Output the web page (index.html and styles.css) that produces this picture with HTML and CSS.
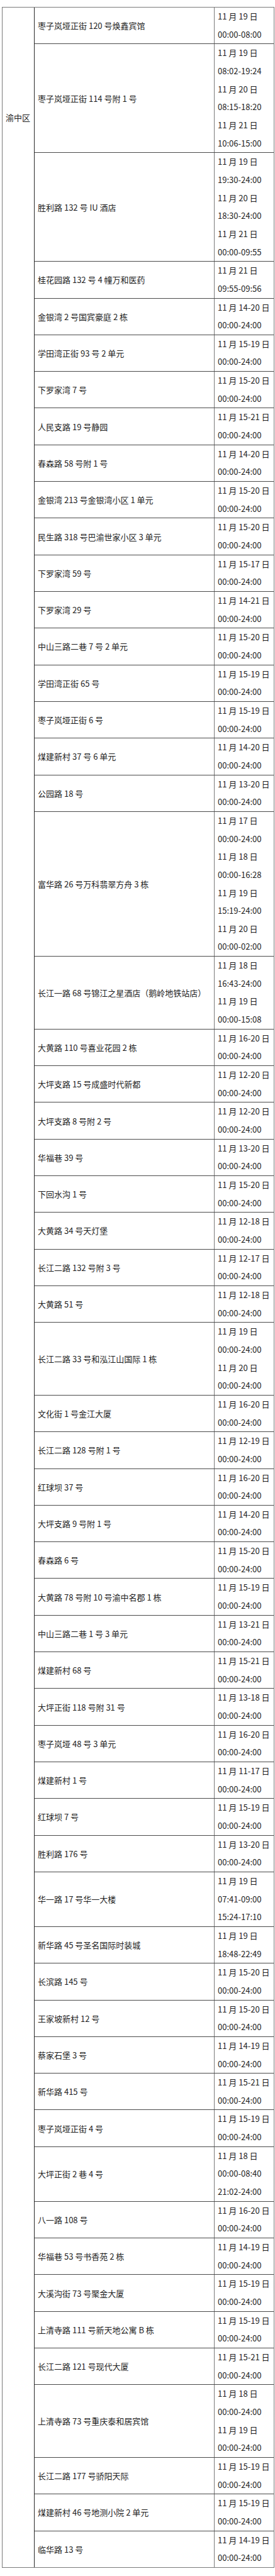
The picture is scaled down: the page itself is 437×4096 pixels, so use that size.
FILE: index.html
```html
<!DOCTYPE html>
<html lang="zh-CN">
<head>
<meta charset="utf-8">
<title>渝中区</title>
<link rel="stylesheet" href="styles.css">
</head>
<body>
<div class="table">
  <div class="district"><div class="district-name">渝中区</div></div>
  <div class="rows">
    <div class="row"><div class="addr">枣子岚垭正街 120 号焕鑫宾馆</div><div class="time"><div class="t">11 月 19 日</div><div class="t">00:00-08:00</div></div></div>
    <div class="row"><div class="addr">枣子岚垭正街 114 号附 1 号</div><div class="time"><div class="t">11 月 19 日</div><div class="t">08:02-19:24</div><div class="t">11 月 20 日</div><div class="t">08:15-18:20</div><div class="t">11 月 21 日</div><div class="t">10:06-15:00</div></div></div>
    <div class="row"><div class="addr">胜利路 132 号 IU 酒店</div><div class="time"><div class="t">11 月 19 日</div><div class="t">19:30-24:00</div><div class="t">11 月 20 日</div><div class="t">18:30-24:00</div><div class="t">11 月 21 日</div><div class="t">00:00-09:55</div></div></div>
    <div class="row"><div class="addr">桂花园路 132 号 4 幢万和医药</div><div class="time"><div class="t">11 月 21 日</div><div class="t">09:55-09:56</div></div></div>
    <div class="row"><div class="addr">金银湾 2 号国宾豪庭 2 栋</div><div class="time"><div class="t">11 月 14-20 日</div><div class="t">00:00-24:00</div></div></div>
    <div class="row"><div class="addr">学田湾正街 93 号 2 单元</div><div class="time"><div class="t">11 月 15-19 日</div><div class="t">00:00-24:00</div></div></div>
    <div class="row"><div class="addr">下罗家湾 7 号</div><div class="time"><div class="t">11 月 15-20 日</div><div class="t">00:00-24:00</div></div></div>
    <div class="row"><div class="addr">人民支路 19 号静园</div><div class="time"><div class="t">11 月 15-21 日</div><div class="t">00:00-24:00</div></div></div>
    <div class="row"><div class="addr">春森路 58 号附 1 号</div><div class="time"><div class="t">11 月 14-20 日</div><div class="t">00:00-24:00</div></div></div>
    <div class="row"><div class="addr">金银湾 213 号金银湾小区 1 单元</div><div class="time"><div class="t">11 月 15-20 日</div><div class="t">00:00-24:00</div></div></div>
    <div class="row"><div class="addr">民生路 318 号巴渝世家小区 3 单元</div><div class="time"><div class="t">11 月 15-20 日</div><div class="t">00:00-24:00</div></div></div>
    <div class="row"><div class="addr">下罗家湾 59 号</div><div class="time"><div class="t">11 月 15-17 日</div><div class="t">00:00-24:00</div></div></div>
    <div class="row"><div class="addr">下罗家湾 29 号</div><div class="time"><div class="t">11 月 14-21 日</div><div class="t">00:00-24:00</div></div></div>
    <div class="row"><div class="addr">中山三路二巷 7 号 2 单元</div><div class="time"><div class="t">11 月 15-20 日</div><div class="t">00:00-24:00</div></div></div>
    <div class="row"><div class="addr">学田湾正街 65 号</div><div class="time"><div class="t">11 月 15-19 日</div><div class="t">00:00-24:00</div></div></div>
    <div class="row"><div class="addr">枣子岚垭正街 6 号</div><div class="time"><div class="t">11 月 15-19 日</div><div class="t">00:00-24:00</div></div></div>
    <div class="row"><div class="addr">煤建新村 37 号 6 单元</div><div class="time"><div class="t">11 月 14-20 日</div><div class="t">00:00-24:00</div></div></div>
    <div class="row"><div class="addr">公园路 18 号</div><div class="time"><div class="t">11 月 13-20 日</div><div class="t">00:00-24:00</div></div></div>
    <div class="row"><div class="addr">富华路 26 号万科翡翠方舟 3 栋</div><div class="time"><div class="t">11 月 17 日</div><div class="t">00:00-24:00</div><div class="t">11 月 18 日</div><div class="t">00:00-16:28</div><div class="t">11 月 19 日</div><div class="t">15:19-24:00</div><div class="t">11 月 20 日</div><div class="t">00:00-02:00</div></div></div>
    <div class="row"><div class="addr">长江一路 68 号锦江之星酒店（鹅岭地铁站店）</div><div class="time"><div class="t">11 月 18 日</div><div class="t">16:43-24:00</div><div class="t">11 月 19 日</div><div class="t">00:00-15:08</div></div></div>
    <div class="row"><div class="addr">大黄路 110 号喜业花园 2 栋</div><div class="time"><div class="t">11 月 16-20 日</div><div class="t">00:00-24:00</div></div></div>
    <div class="row"><div class="addr">大坪支路 15 号成盛时代新都</div><div class="time"><div class="t">11 月 12-20 日</div><div class="t">00:00-24:00</div></div></div>
    <div class="row"><div class="addr">大坪支路 8 号附 2 号</div><div class="time"><div class="t">11 月 12-20 日</div><div class="t">00:00-24:00</div></div></div>
    <div class="row"><div class="addr">华福巷 39 号</div><div class="time"><div class="t">11 月 13-20 日</div><div class="t">00:00-24:00</div></div></div>
    <div class="row"><div class="addr">下回水沟 1 号</div><div class="time"><div class="t">11 月 15-20 日</div><div class="t">00:00-24:00</div></div></div>
    <div class="row"><div class="addr">大黄路 34 号天灯堡</div><div class="time"><div class="t">11 月 12-18 日</div><div class="t">00:00-24:00</div></div></div>
    <div class="row"><div class="addr">长江二路 132 号附 3 号</div><div class="time"><div class="t">11 月 12-17 日</div><div class="t">00:00-24:00</div></div></div>
    <div class="row"><div class="addr">大黄路 51 号</div><div class="time"><div class="t">11 月 12-18 日</div><div class="t">00:00-24:00</div></div></div>
    <div class="row"><div class="addr">长江二路 33 号和泓江山国际 1 栋</div><div class="time"><div class="t">11 月 19 日</div><div class="t">00:00-24:00</div><div class="t">11 月 20 日</div><div class="t">00:00-24:00</div></div></div>
    <div class="row"><div class="addr">文化街 1 号金江大厦</div><div class="time"><div class="t">11 月 16-20 日</div><div class="t">00:00-24:00</div></div></div>
    <div class="row"><div class="addr">长江二路 128 号附 1 号</div><div class="time"><div class="t">11 月 12-19 日</div><div class="t">00:00-24:00</div></div></div>
    <div class="row"><div class="addr">红球坝 37 号</div><div class="time"><div class="t">11 月 16-20 日</div><div class="t">00:00-24:00</div></div></div>
    <div class="row"><div class="addr">大坪支路 9 号附 1 号</div><div class="time"><div class="t">11 月 14-20 日</div><div class="t">00:00-24:00</div></div></div>
    <div class="row"><div class="addr">春森路 6 号</div><div class="time"><div class="t">11 月 15-20 日</div><div class="t">00:00-24:00</div></div></div>
    <div class="row"><div class="addr">大黄路 78 号附 10 号渝中名郡 1 栋</div><div class="time"><div class="t">11 月 15-19 日</div><div class="t">00:00-24:00</div></div></div>
    <div class="row"><div class="addr">中山三路二巷 1 号 3 单元</div><div class="time"><div class="t">11 月 13-21 日</div><div class="t">00:00-24:00</div></div></div>
    <div class="row"><div class="addr">煤建新村 68 号</div><div class="time"><div class="t">11 月 15-21 日</div><div class="t">00:00-24:00</div></div></div>
    <div class="row"><div class="addr">大坪正街 118 号附 31 号</div><div class="time"><div class="t">11 月 13-18 日</div><div class="t">00:00-24:00</div></div></div>
    <div class="row"><div class="addr">枣子岚垭 48 号 3 单元</div><div class="time"><div class="t">11 月 16-20 日</div><div class="t">00:00-24:00</div></div></div>
    <div class="row"><div class="addr">煤建新村 1 号</div><div class="time"><div class="t">11 月 11-17 日</div><div class="t">00:00-24:00</div></div></div>
    <div class="row"><div class="addr">红球坝 7 号</div><div class="time"><div class="t">11 月 15-19 日</div><div class="t">00:00-24:00</div></div></div>
    <div class="row"><div class="addr">胜利路 176 号</div><div class="time"><div class="t">11 月 13-20 日</div><div class="t">00:00-24:00</div></div></div>
    <div class="row"><div class="addr">华一路 17 号华一大楼</div><div class="time"><div class="t">11 月 19 日</div><div class="t">07:41-09:00</div><div class="t">15:24-17:10</div></div></div>
    <div class="row"><div class="addr">新华路 45 号圣名国际时装城</div><div class="time"><div class="t">11 月 19 日</div><div class="t">18:48-22:49</div></div></div>
    <div class="row"><div class="addr">长滨路 145 号</div><div class="time"><div class="t">11 月 15-20 日</div><div class="t">00:00-24:00</div></div></div>
    <div class="row"><div class="addr">王家坡新村 12 号</div><div class="time"><div class="t">11 月 15-20 日</div><div class="t">00:00-24:00</div></div></div>
    <div class="row"><div class="addr">蔡家石堡 3 号</div><div class="time"><div class="t">11 月 14-19 日</div><div class="t">00:00-24:00</div></div></div>
    <div class="row"><div class="addr">新华路 415 号</div><div class="time"><div class="t">11 月 15-21 日</div><div class="t">00:00-24:00</div></div></div>
    <div class="row"><div class="addr">枣子岚垭正街 4 号</div><div class="time"><div class="t">11 月 15-19 日</div><div class="t">00:00-24:00</div></div></div>
    <div class="row"><div class="addr">大坪正街 2 巷 4 号</div><div class="time"><div class="t">11 月 18 日</div><div class="t">00:00-08:40</div><div class="t">21:02-24:00</div></div></div>
    <div class="row"><div class="addr">八一路 108 号</div><div class="time"><div class="t">11 月 16-20 日</div><div class="t">00:00-24:00</div></div></div>
    <div class="row"><div class="addr">华福巷 53 号书香苑 2 栋</div><div class="time"><div class="t">11 月 14-19 日</div><div class="t">00:00-24:00</div></div></div>
    <div class="row"><div class="addr">大溪沟街 73 号聚金大厦</div><div class="time"><div class="t">11 月 15-19 日</div><div class="t">00:00-24:00</div></div></div>
    <div class="row"><div class="addr">上清寺路 111 号新天地公寓 B 栋</div><div class="time"><div class="t">11 月 15-19 日</div><div class="t">00:00-24:00</div></div></div>
    <div class="row"><div class="addr">长江二路 121 号现代大厦</div><div class="time"><div class="t">11 月 15-21 日</div><div class="t">00:00-24:00</div></div></div>
    <div class="row"><div class="addr">上清寺路 73 号重庆泰和居宾馆</div><div class="time"><div class="t">11 月 18 日</div><div class="t">00:00-24:00</div><div class="t">11 月 19 日</div><div class="t">00:00-24:00</div></div></div>
    <div class="row"><div class="addr">长江二路 177 号骄阳天际</div><div class="time"><div class="t">11 月 15-19 日</div><div class="t">00:00-24:00</div></div></div>
    <div class="row"><div class="addr">煤建新村 46 号地测小院 2 单元</div><div class="time"><div class="t">11 月 15-19 日</div><div class="t">00:00-24:00</div></div></div>
    <div class="row"><div class="addr">临华路 13 号</div><div class="time"><div class="t">11 月 14-19 日</div><div class="t">00:00-24:00</div></div></div>
  </div>
</div>
</body>
</html>
```

FILE: styles.css
```css
html, body {
  margin: 0;
  padding: 0;
  background: #ffffff;
}

body {
  font-family: "Noto Sans CJK SC", "Noto Sans", sans-serif;
  font-size: 13px;
  color: #1e1e1e;
}

.table {
  display: flex;
  box-sizing: border-box;
  width: 433px;
  margin: 11px 0 0 3px;
  border: 1px solid #7a7a7a;
}

.district {
  box-sizing: border-box;
  width: 51px;
  flex: none;
  border-right: 1px solid #2a2a2a;
  padding: 160px 0 0 5px;
}

.district-name {
  line-height: 29px;
  white-space: nowrap;
}

.rows {
  flex: 1;
  min-width: 0;
}

.row {
  display: grid;
  grid-template-columns: 286px 1fr;
  border-top: 1px solid #4a4a4a;
}

.row:first-child {
  border-top: none;
}

.addr {
  box-sizing: border-box;
  display: flex;
  align-items: center;
  padding-left: 5px;
  border-right: 1px solid #7a7a7a;
  white-space: nowrap;
}

.time {
  padding-left: 5px;
  overflow: hidden;
}

.t {
  line-height: 28.65px;
  white-space: nowrap;
}
```
